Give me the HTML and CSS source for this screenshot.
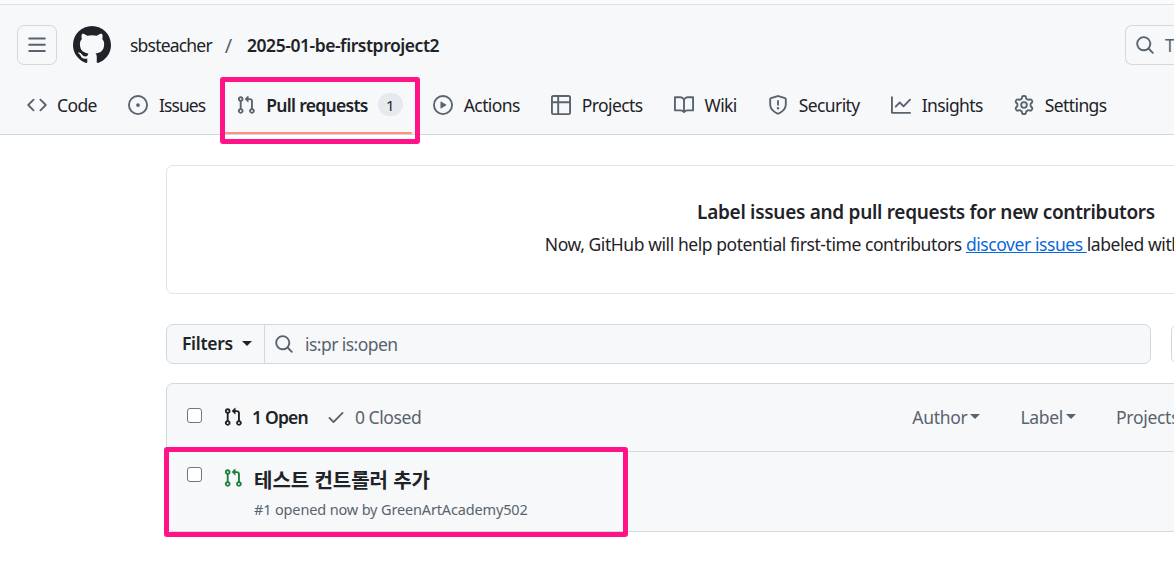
FILE: index.html
```html
<!DOCTYPE html>
<html lang="en">
<head>
<meta charset="utf-8">
<title>Pull requests</title>
<link rel="stylesheet" href="styles.css">
</head>
<body>
<svg class="defs" width="0" height="0" aria-hidden="true">
<symbol id="i-bars" viewBox="0 0 16 16"><path d="M1 2.75A.75.75 0 011.75 2h12.5a.75.75 0 010 1.5H1.75A.75.75 0 011 2.75zm0 5A.75.75 0 011.75 7h12.5a.75.75 0 010 1.5H1.75A.75.75 0 011 7.75zM1.75 12h12.5a.75.75 0 010 1.5H1.75a.75.75 0 010-1.5z"/></symbol>
<symbol id="i-github" viewBox="0 0 16 16"><path d="M8 0c4.42 0 8 3.58 8 8a8.013 8.013 0 01-5.45 7.59c-.4.08-.55-.17-.55-.38 0-.27.01-1.13.01-2.2 0-.75-.25-1.23-.54-1.48 1.78-.2 3.65-.88 3.65-3.95 0-.88-.31-1.59-.82-2.15.08-.2.36-1.02-.08-2.12 0 0-.67-.22-2.2.82-.64-.18-1.32-.27-2-.27-.68 0-1.36.09-2 .27-1.53-1.03-2.2-.82-2.2-.82-.44 1.1-.16 1.92-.08 2.12-.51.56-.82 1.28-.82 2.15 0 3.06 1.86 3.75 3.64 3.95-.23.2-.44.55-.51 1.07-.46.21-1.61.55-2.33-.66-.15-.24-.6-.83-1.23-.82-.67.01-.27.38.01.53.34.19.73.9.82 1.13.16.45.68 1.31 2.69.94 0 .67.01 1.3.01 1.49 0 .21-.15.45-.55.38A7.995 7.995 0 010 8c0-4.42 3.58-8 8-8z"/></symbol>
<symbol id="i-search" viewBox="0 0 16 16"><path d="M10.68 11.74a6 6 0 01-7.922-8.982 6 6 0 018.982 7.922l3.04 3.04a.749.749 0 01-.326 1.275.749.749 0 01-.734-.215zM11.5 7a4.499 4.499 0 10-8.997 0A4.499 4.499 0 0011.5 7z"/></symbol>
<symbol id="i-code" viewBox="0 0 16 16"><path d="M11.28 3.22l4.25 4.25a.75.75 0 010 1.06l-4.25 4.25a.749.749 0 01-1.275-.326.749.749 0 01.215-.734L13.94 8l-3.72-3.72a.749.749 0 01.326-1.275.749.749 0 01.734.215zm-6.56 0a.751.751 0 011.042.018.751.751 0 01.018 1.042L2.06 8l3.72 3.72a.749.749 0 01-.326 1.275.749.749 0 01-.734-.215L.47 8.53a.75.75 0 010-1.06z"/></symbol>
<symbol id="i-issue" viewBox="0 0 16 16"><path d="M8 9.5a1.5 1.5 0 100-3 1.5 1.5 0 000 3z"/><path d="M8 0a8 8 0 110 16A8 8 0 018 0zM1.5 8a6.5 6.5 0 1013 0 6.5 6.5 0 00-13 0z"/></symbol>
<symbol id="i-pr" viewBox="0 0 16 16"><path d="M1.5 3.25a2.25 2.25 0 113 2.122v5.256a2.251 2.251 0 11-1.5 0V5.372A2.25 2.25 0 011.5 3.25zm5.677-.177L9.573.677A.25.25 0 0110 .854V2.5h1A2.5 2.5 0 0113.5 5v5.628a2.251 2.251 0 11-1.5 0V5a1 1 0 00-1-1h-1v1.646a.25.25 0 01-.427.177L7.177 3.427a.25.25 0 010-.354zM3.75 2.5a.75.75 0 100 1.5.75.75 0 000-1.5zm0 9.5a.75.75 0 100 1.5.75.75 0 000-1.5zm8.25.75a.75.75 0 101.5 0 .75.75 0 00-1.5 0z"/></symbol>
<symbol id="i-play" viewBox="0 0 16 16"><path d="M8 0a8 8 0 110 16A8 8 0 018 0zM1.5 8a6.5 6.5 0 1013 0 6.5 6.5 0 00-13 0zm4.879-2.773l4.264 2.559a.25.25 0 010 .428l-4.264 2.559A.25.25 0 016 10.559V5.442a.25.25 0 01.379-.215z"/></symbol>
<symbol id="i-table" viewBox="0 0 16 16"><path d="M0 1.75C0 .784.784 0 1.75 0h12.5C15.216 0 16 .784 16 1.75v12.5A1.75 1.75 0 0114.25 16H1.75A1.75 1.75 0 010 14.25V1.75zM6.5 6.5v8h7.75a.25.25 0 00.25-.25V6.5h-8zm8-1.5V1.75a.25.25 0 00-.25-.25H6.5V5h8zM5 1.5H1.75a.25.25 0 00-.25.25V5H5V1.5zM1.5 6.5v7.75c0 .138.112.25.25.25H5v-8H1.5z"/></symbol>
<symbol id="i-book" viewBox="0 0 16 16"><path d="M0 1.75A.75.75 0 01.75 1h4.253c1.227 0 2.317.59 3 1.501A3.744 3.744 0 0111.006 1h4.245a.75.75 0 01.75.75v10.5a.75.75 0 01-.75.75h-4.507a2.25 2.25 0 00-1.591.659l-.622.621a.75.75 0 01-1.06 0l-.622-.621A2.25 2.25 0 005.258 13H.75a.75.75 0 01-.75-.75zm7.251 10.324l.004-5.073-.002-2.253A2.25 2.25 0 005.003 2.5H1.5v9h3.757a3.75 3.75 0 011.994.574zM8.755 4.75l-.004 7.322a3.752 3.752 0 011.992-.572H14.5v-9h-3.495a2.25 2.25 0 00-2.25 2.25z"/></symbol>
<symbol id="i-shield" viewBox="0 0 16 16"><path d="M7.467.133a1.748 1.748 0 011.066 0l5.25 1.68A1.75 1.75 0 0115 3.48V7c0 1.566-.32 3.182-1.303 4.682-.983 1.498-2.585 2.813-5.032 3.855a1.697 1.697 0 01-1.33 0c-2.447-1.042-4.049-2.357-5.032-3.855C1.32 10.182 1 8.566 1 7V3.48a1.75 1.75 0 011.217-1.667zm.61 1.429a.25.25 0 00-.153 0l-5.25 1.68a.25.25 0 00-.174.238V7c0 1.358.275 2.666 1.057 3.86.784 1.194 2.121 2.34 4.366 3.297a.196.196 0 00.154 0c2.245-.956 3.582-2.104 4.366-3.298C13.225 9.666 13.5 8.36 13.5 7V3.48a.251.251 0 00-.174-.237l-5.25-1.68zM8.75 4.75v3a.75.75 0 01-1.5 0v-3a.75.75 0 011.5 0zM9 10.5a1 1 0 11-2 0 1 1 0 012 0z"/></symbol>
<symbol id="i-graph" viewBox="0 0 16 16"><path d="M1.5 1.75V13.5h13.75a.75.75 0 010 1.5H.75a.75.75 0 01-.75-.75V1.75a.75.75 0 011.5 0zm14.28 2.53l-5.25 5.25a.75.75 0 01-1.06 0L7 7.06 4.28 9.78a.751.751 0 01-1.042-.018.751.751 0 01-.018-1.042l3.25-3.25a.75.75 0 011.06 0L10 7.94l4.72-4.72a.751.751 0 011.042.018.751.751 0 01.018 1.042z"/></symbol>
<symbol id="i-gear" viewBox="0 0 16 16"><path d="M8 0a8.2 8.2 0 01.701.031C9.444.095 9.99.645 10.16 1.29l.288 1.107c.018.066.079.158.212.224.231.114.454.243.668.386.123.082.233.09.299.071l1.103-.303c.644-.176 1.392.021 1.82.63.27.385.506.792.704 1.218.315.675.111 1.422-.364 1.891l-.814.806c-.049.048-.098.147-.088.294.016.257.016.515 0 .772-.01.147.038.246.088.294l.814.806c.475.469.679 1.216.364 1.891a7.977 7.977 0 01-.704 1.217c-.428.61-1.176.807-1.82.63l-1.102-.302c-.067-.019-.177-.011-.3.071a5.909 5.909 0 01-.668.386c-.133.066-.194.158-.211.224l-.29 1.106c-.168.646-.715 1.196-1.458 1.26a8.006 8.006 0 01-1.402 0c-.743-.064-1.289-.614-1.458-1.26l-.289-1.106c-.018-.066-.079-.158-.212-.224a5.738 5.738 0 01-.668-.386c-.123-.082-.233-.09-.299-.071l-1.103.303c-.644.176-1.392-.021-1.82-.63a8.12 8.12 0 01-.704-1.218c-.315-.675-.111-1.422.363-1.891l.815-.806c.05-.048.098-.147.088-.294a6.214 6.214 0 010-.772c.01-.147-.038-.246-.088-.294l-.815-.806C.635 6.045.431 5.298.746 4.623a7.92 7.92 0 01.704-1.217c.428-.61 1.176-.807 1.82-.63l1.102.302c.067.019.177.011.3-.071.214-.143.437-.272.668-.386.133-.066.194-.158.211-.224l.29-1.106C6.009.645 6.556.095 7.299.03 7.53.01 7.764 0 8 0zm-.571 1.525c-.036.003-.108.036-.137.146l-.289 1.105c-.147.561-.549.967-.998 1.189-.173.086-.34.183-.5.29-.417.278-.97.423-1.529.27l-1.103-.303c-.109-.03-.175.016-.195.045-.22.312-.412.644-.573.99-.014.031-.021.11.059.19l.815.806c.411.406.562.957.53 1.456a4.709 4.709 0 000 .582c.032.499-.119 1.05-.53 1.456l-.815.806c-.081.08-.073.159-.059.19.162.346.353.677.573.989.02.03.085.076.195.046l1.102-.303c.56-.153 1.113-.008 1.53.27.161.107.328.204.501.29.447.222.85.629.997 1.189l.289 1.105c.029.109.101.143.137.146a6.6 6.6 0 001.142 0c.036-.003.108-.036.137-.146l.289-1.105c.147-.561.549-.967.998-1.189.173-.086.34-.183.5-.29.417-.278.97-.423 1.529-.27l1.103.303c.109.029.175-.016.195-.045.22-.313.411-.644.573-.99.014-.031.021-.11-.059-.19l-.815-.806c-.411-.406-.562-.957-.53-1.456a4.709 4.709 0 000-.582c-.032-.499.119-1.05.53-1.456l.815-.806c.081-.08.073-.159.059-.19a6.464 6.464 0 00-.573-.989c-.02-.03-.085-.076-.195-.046l-1.102.303c-.56.153-1.113.008-1.53-.27a4.44 4.44 0 00-.501-.29c-.447-.222-.85-.629-.997-1.189l-.289-1.105c-.029-.11-.101-.143-.137-.146a6.6 6.6 0 00-1.142 0zM11 8a3 3 0 11-6 0 3 3 0 016 0zM9.5 8a1.5 1.5 0 10-3.001.001A1.5 1.5 0 009.5 8z"/></symbol>
<symbol id="i-check" viewBox="0 0 16 16"><path d="M13.78 4.22a.75.75 0 010 1.06l-7.25 7.25a.75.75 0 01-1.06 0L2.22 9.28a.751.751 0 01.018-1.042.751.751 0 011.042-.018L6 10.94l6.72-6.72a.75.75 0 011.06 0z"/></symbol>
</svg>

<div class="page">
  <div class="topline"></div>
  <header class="header">
    <div class="toprow">
      <button class="menu-btn" type="button"><svg class="icon"><use href="#i-bars"/></svg></button>
      <svg class="logo"><use href="#i-github"/></svg>
      <nav class="crumbs">
        <a class="owner">sbsteacher</a>
        <span class="slash">/</span>
        <a class="repo">2025-01-be-firstproject2</a>
      </nav>
      <div class="top-search"><svg class="icon"><use href="#i-search"/></svg><span class="top-search-text">Type / to search</span></div>
    </div>
    <nav class="tabs">
      <a class="tab tab-code"><svg class="icon"><use href="#i-code"/></svg>Code</a>
      <a class="tab tab-issues"><svg class="icon"><use href="#i-issue"/></svg>Issues</a>
      <a class="tab tab-active"><svg class="icon"><use href="#i-pr"/></svg><span class="tab-label">Pull requests</span><span class="counter">1</span></a>
      <a class="tab"><svg class="icon"><use href="#i-play"/></svg>Actions</a>
      <a class="tab"><svg class="icon"><use href="#i-table"/></svg>Projects</a>
      <a class="tab"><svg class="icon"><use href="#i-book"/></svg>Wiki</a>
      <a class="tab"><svg class="icon"><use href="#i-shield"/></svg>Security</a>
      <a class="tab"><svg class="icon"><use href="#i-graph"/></svg>Insights</a>
      <a class="tab"><svg class="icon"><use href="#i-gear"/></svg>Settings</a>
    </nav>
  </header>

  <main class="content">
    <section class="banner">
      <h2 class="banner-title">Label issues and pull requests for new contributors</h2>
      <p class="banner-text">Now, GitHub will help potential first-time contributors <a class="link">discover issues </a>labeled with good first issue</p>
    </section>

    <div class="filter-row">
      <div class="filter-bar">
        <button class="filter-btn" type="button">Filters<span class="caret caret-dark"></span></button>
        <div class="filter-input"><svg class="icon"><use href="#i-search"/></svg><span>is:pr is:open</span></div>
      </div>
      <div class="next-btn"></div>
    </div>

    <section class="list">
      <div class="list-head">
        <span class="checkbox"></span>
        <svg class="icon icon-dark"><use href="#i-pr"/></svg>
        <span class="state-open">1 Open</span>
        <svg class="icon icon-check"><use href="#i-check"/></svg>
        <span class="state-closed">0 Closed</span>
        <div class="sorts">
          <span class="sort">Author<span class="caret"></span></span>
          <span class="sort">Label<span class="caret"></span></span>
          <span class="sort">Projects<span class="caret"></span></span>
        </div>
      </div>
      <div class="list-row">
        <span class="checkbox"></span>
        <svg class="icon icon-green"><use href="#i-pr"/></svg>
        <div class="row-body">
          <a class="row-title">테스트 컨트롤러 추가</a>
          <div class="row-meta">#1 opened now by GreenArtAcademy502</div>
        </div>
      </div>
    </section>
  </main>

  <div class="mark mark-tab"></div>
  <div class="mark mark-row"></div>
</div>
</body>
</html>
```
FILE: styles.css
```css
* { box-sizing: border-box; }
html, body { margin: 0; padding: 0; background: #fff; }
body {
  font-family: "Noto Sans", "Noto Sans CJK KR", sans-serif;
  font-size: 17.5px;
  color: #1f2328;
  letter-spacing: -0.3px;
}
.defs { position: absolute; }
.page { position: relative; width: 1174px; height: 570px; overflow: hidden; }
.topline { height: 5px; background: #fbfbfe; border-bottom: 1px solid #dfe1ec; }
.icon { width: 20px; height: 20px; fill: #59636e; flex: none; display: block; }

.header { background: #f6f8fa; border-bottom: 1px solid #d1d9e0; height: 130px; }
.toprow { display: flex; align-items: center; padding: 20px 0 0 17px; height: 60px; }
.menu-btn {
  width: 40px; height: 40px; padding: 0; display: flex; align-items: center; justify-content: center;
  background: transparent; border: 1px solid #d1d9e0; border-radius: 7px;
}
.logo { width: 38px; height: 38px; margin-left: 16px; fill: #1f2328; flex: none; }
.crumbs { display: flex; align-items: center; margin-left: 19px; }
.owner { color: #1f2328; letter-spacing: -0.8px; }
.slash { color: #59636e; margin: 0 15px 0 13px; font-size: 20px; }
.repo { font-weight: 600; color: #1f2328; letter-spacing: -0.45px; }
.top-search {
  margin-left: auto; width: 49px; height: 40px; display: flex; align-items: center; gap: 10px; padding-left: 9px;
  border: 1px solid #d1d9e0; border-right: 0; border-radius: 7px 0 0 7px; overflow: hidden; white-space: nowrap;
}
.top-search-text { color: #59636e; }

.tabs { display: flex; gap: 11px; padding: 0 0 0 17px; height: 70px; align-items: stretch; letter-spacing: -0.6px; }
.tab {
  display: flex; align-items: center; gap: 11px; padding: 0 10px 6px; height: 53px; margin-top: 16px;
  color: #1f2328; white-space: nowrap; position: relative;
}
.tab-code { gap: 10px; }
.tab-issues { letter-spacing: -0.9px; }
.tab-label { font-weight: 600; letter-spacing: -0.7px; }
.tab-active { gap: 10px; padding-right: 9px; }
.tab-active::after {
  content: ""; position: absolute; left: -1px; right: 0; bottom: 0; height: 2px; background: #ff8f78; border-radius: 2px;
}
.counter {
  display: flex; align-items: center; justify-content: center; width: 25px; height: 23px; border-radius: 12px;
  background: #e6eaef; font-size: 15px; letter-spacing: 0;
}

.content { width: 1520px; margin-left: 166px; padding-top: 30px; }
.banner {
  height: 129px; border: 1px solid #e1e4e8; border-radius: 7px; text-align: center; padding-top: 33px;
}
.banner-title { margin: 0; font-size: 19px; font-weight: 600; line-height: 27px; }
.banner-text { margin: 5px 0 0; padding-right: 2px; line-height: 27px; letter-spacing: -0.43px; }
.link { color: #0969da; text-decoration: underline; }

.filter-row { display: flex; gap: 20px; margin-top: 30px; }
.filter-bar {
  width: 985px; height: 40px; display: flex; background: #f6f8fa; border: 1px solid #d1d9e0; border-radius: 7px;
}
.filter-btn {
  width: 98px; padding: 0 0 2px 15px; display: flex; align-items: center; gap: 9px; background: transparent;
  border: 0; border-right: 1px solid #d1d9e0; font: inherit; font-weight: 600; color: #1f2328; letter-spacing: inherit;
}
.caret { display: inline-block; border: 5px solid transparent; border-top-color: #59636e; border-bottom: 0; }
.caret-dark { border-top-color: #1f2328; }
.filter-input { display: flex; align-items: center; gap: 11px; padding-left: 9px; color: #59636e; letter-spacing: -0.55px; }
.next-btn { width: 100px; height: 40px; border: 1px solid #d1d9e0; border-radius: 7px; }

.list { margin-top: 19px; border: 1px solid #d1d9e0; border-radius: 7px; background: #f6f8fa; }
.list-head { height: 68px; display: flex; align-items: center; padding: 0 0 2px 20px; border-bottom: 1px solid #d1d9e0; }
.checkbox {
  width: 15px; height: 15px; flex: none; background: #fff; border: 1px solid #6e7781; border-radius: 3px;
}
.list-head .checkbox { margin-top: -3px; }
.icon-dark { fill: #1f2328; margin-left: 21px; }
.state-open { font-weight: 600; margin-left: 9px; letter-spacing: -0.8px; }
.icon-check { margin-left: 18px; }
.state-closed { color: #59636e; margin-left: 9px; letter-spacing: -0.42px; }
.sorts { display: flex; margin-left: 491px; gap: 40px; color: #59636e; }
.sort { display: flex; align-items: center; gap: 3px; }

.list-row { height: 79px; display: flex; align-items: flex-start; padding: 15px 0 0 20px; border-bottom: 0; }
.icon-green { fill: #1a7f37; margin: 1px 0 0 21px; }
.row-body { margin-left: 11px; padding-top: 1px; }
.row-title { display: block; font-size: 20px; font-weight: 600; line-height: 26px; color: #1f2328; letter-spacing: 0; }
.row-meta { font-size: 14.5px; line-height: 20px; color: #59636e; margin-top: 5px; letter-spacing: -0.15px; }

.mark { position: absolute; border: 5px solid #ff1387; border-radius: 3px; }
.mark-tab { left: 220px; top: 77px; width: 200px; height: 67px; }
.mark-row { left: 164px; top: 447px; width: 464px; height: 90px; }
```
